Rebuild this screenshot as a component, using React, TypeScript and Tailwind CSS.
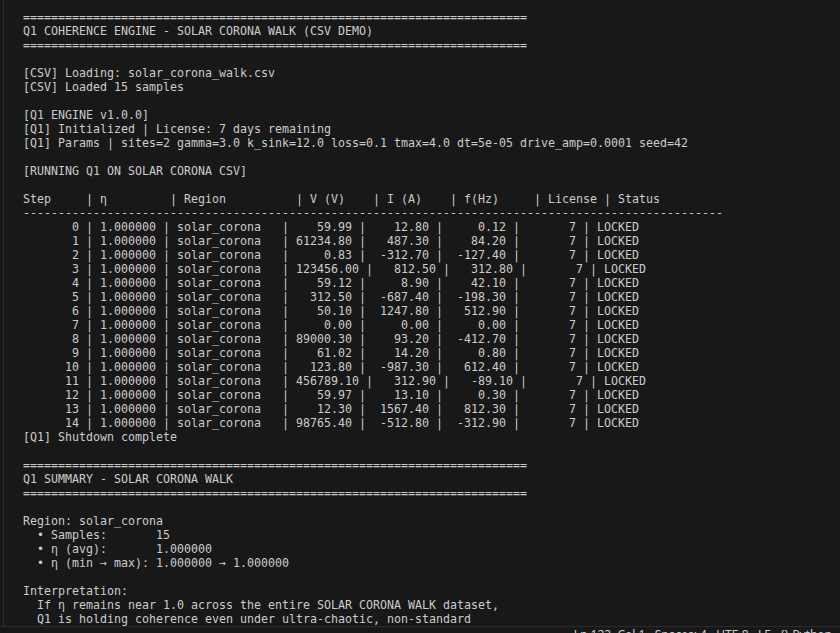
import React from "react";

type Row = [number, number, number, number];

const data: Row[] = [
  [0, 59.99, 12.8, 0.12],
  [1, 61234.8, 487.3, 84.2],
  [2, 0.83, -312.7, -127.4],
  [3, 123456.0, 812.5, 312.8],
  [4, 59.12, 8.9, 42.1],
  [5, 312.5, -687.4, -198.3],
  [6, 50.1, 1247.8, 512.9],
  [7, 0.0, 0.0, 0.0],
  [8, 89000.3, 93.2, -412.7],
  [9, 61.02, 14.2, 0.8],
  [10, 123.8, -987.3, 612.4],
  [11, 456789.1, 312.9, -89.1],
  [12, 59.97, 13.1, 0.3],
  [13, 12.3, 1567.4, 812.3],
  [14, 98765.4, -512.8, -312.9],
];

const f2 = (n: number) => (n.toFixed(2) === "-0.00" ? "0.00" : n.toFixed(2)).padStart(8, " ");

const rowLine = ([s, v, i, f]: Row) =>
  `${String(s).padStart(8, " ")} | 1.000000 | ${"solar_corona".padEnd(15, " ")}| ${f2(v)} | ${f2(i)} | ${f2(f)} | ${"7".padStart(7, " ")} | LOCKED`;

const eq = "=".repeat(72);

const lines: string[] = [
  eq,
  "Q1 COHERENCE ENGINE - SOLAR CORONA WALK (CSV DEMO)",
  eq,
  "",
  "[CSV] Loading: solar_corona_walk.csv",
  "[CSV] Loaded 15 samples",
  "",
  "[Q1 ENGINE v1.0.0]",
  "[Q1] Initialized | License: 7 days remaining",
  "[Q1] Params | sites=2 gamma=3.0 k_sink=12.0 loss=0.1 tmax=4.0 dt=5e-05 drive_amp=0.0001 seed=42",
  "",
  "[RUNNING Q1 ON SOLAR CORONA CSV]",
  "",
  "Step     | η         | Region          | V (V)    | I (A)    | f(Hz)     | License | Status",
  "-".repeat(100),
  ...data.map(rowLine),
  "[Q1] Shutdown complete",
  "",
  eq,
  "Q1 SUMMARY - SOLAR CORONA WALK",
  eq,
  "",
  "Region: solar_corona",
  "  • Samples:       15",
  "  • η (avg):       1.000000",
  "  • η (min → max): 1.000000 → 1.000000",
  "",
  "Interpretation:",
  "  If η remains near 1.0 across the entire SOLAR CORONA WALK dataset,",
  "  Q1 is holding coherence even under ultra-chaotic, non-standard",
];

export default function App() {
  return (
    <div className="h-[633px] w-[840px] overflow-hidden bg-[#181818] flex flex-col">
      <div className="h-[626px] shrink-0 flex overflow-hidden">
        <div className="w-[3px] shrink-0" />
        <div className="w-px shrink-0 bg-[#2b2b2b]" />
        <div className="flex-1 pl-[19px] pt-[10px] font-['DejaVu_Sans_Mono',monospace] text-[11.63px] leading-[14px] text-[#cccccc] whitespace-pre">
          {lines.map((l, idx) => (
            <div key={idx} className="h-[14px]">
              {l === "" ? " " : l}
            </div>
          ))}
        </div>
      </div>
      <div className="h-[22px] shrink-0 border-t border-[#2b2b2b] bg-[#181818] flex justify-end pr-[8px] pt-[2px] font-['Noto_Sans',sans-serif] text-[12px] leading-none text-[#cccccc] whitespace-pre">
        <span>Ln 122, Col 1   Spaces: 4   UTF-8   LF   {"{}"} Python</span>
      </div>
    </div>
  );
}
